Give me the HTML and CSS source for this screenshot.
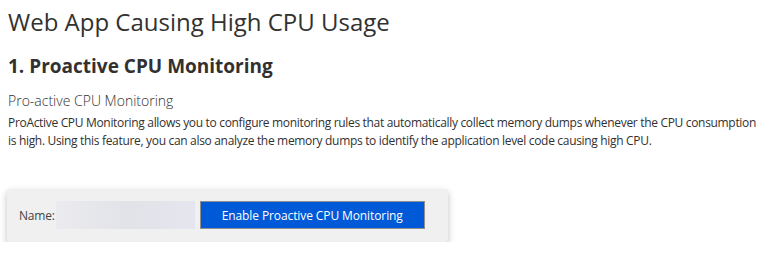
FILE: index.html
```html
<!DOCTYPE html>
<html lang="en">
<head>
    <meta charset="UTF-8">
    <title>Web App Causing High CPU Usage</title>
    <link rel="stylesheet" href="styles.css">
</head>
<body>
    <h1>Web App Causing High CPU Usage</h1>
    <h2>1. Proactive CPU Monitoring</h2>

    <div class="section">
        <div class="section-title">Pro-active CPU Monitoring</div>
        <p class="section-desc">ProActive CPU Monitoring allows you to configure monitoring rules that automatically collect memory dumps whenever the CPU consumption is high. Using this feature, you can also analyze the memory dumps to identify the application level code causing high CPU.</p>
    </div>

    <div class="panel">
        <label class="panel-label" for="siteName">Name:</label>
        <input class="panel-input" id="siteName" type="text">
        <button class="btn-primary" type="button">Enable Proactive CPU Monitoring</button>
    </div>
</body>
</html>
```

FILE: styles.css
```css
body {
    margin: 0;
    padding: 0 8px;
    font-family: "Open Sans", "Noto Sans", sans-serif;
    color: #323130;
    background: #fff;
}
h1 {
    font-size: 24px;
    font-weight: 400;
    line-height: 32px;
    margin: 6px 0 0;
}
h2 {
    font-size: 19px;
    font-weight: 700;
    line-height: 26px;
    margin: 15px 0 0;
}
.section-title {
    font-size: 14px;
    font-weight: 300;
    line-height: 20px;
    margin-top: 12px;
}
.section-desc {
    font-size: 12px;
    line-height: 18px;
    margin: 3px 0 0;
    letter-spacing: -0.32px;
}
.panel {
    display: flex;
    align-items: center;
    width: 407px;
    margin: 39px 0 0 -1px;
    padding: 12px 22px 13px 12px;
    background: #f0f0f0;
    border-radius: 3px;
    box-shadow: 0 3px 7px rgba(0, 0, 0, 0.25);
}
.panel-label {
    font-size: 12px;
    color: #444;
    letter-spacing: -0.2px;
}
.panel-input {
    width: 139px;
    height: 28px;
    box-sizing: border-box;
    border: none;
    margin: 0 5px 0 1px;
    background: linear-gradient(90deg, #ebebef, #e2e3e8 50%, #e4e5ee);
}
.btn-primary {
    width: 225px;
    height: 28px;
    box-sizing: border-box;
    border: 1px solid #8f8f8f;
    background: #0059d6;
    color: #fff;
    font-family: "Open Sans", "Noto Sans", sans-serif;
    font-size: 12px;
    letter-spacing: -0.1px;
    padding: 0;
}
```
